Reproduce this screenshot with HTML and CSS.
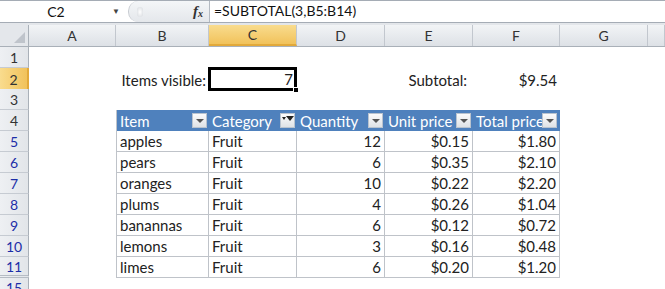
FILE: index.html
```html
<!DOCTYPE html>
<html lang="en">
<head>
  <meta charset="UTF-8">
  <title>SUBTOTAL visible items</title>
  <link rel="stylesheet" href="styles.css">
</head>
<body>
  <div class="formula-bar">
    <div class="name-box">
      <span class="name">C2</span>
      <span class="drop">&#9660;</span>
    </div>
    <div class="fx-area">
      <span class="dimple"></span>
      <span class="fx">f<sub>x</sub></span>
    </div>
    <div class="formula">=SUBTOTAL(3,B5:B14)</div>
  </div>

  <div class="sheet">
    <div class="row col-heads">
      <div class="corner"></div>
      <div class="ch">A</div><div class="ch">B</div><div class="ch sel">C</div><div class="ch">D</div>
      <div class="ch">E</div><div class="ch">F</div><div class="ch">G</div><div class="ch"></div>
    </div>

    <div class="row">
      <div class="rh">1</div>
    </div>
    <div class="row">
      <div class="rh sel">2</div>
      <div class="c"></div>
      <div class="c num">Items visible:</div>
      <div class="c num active">7<span class="handle"></span></div>
      <div class="c"></div>
      <div class="c num label">Subtotal:</div>
      <div class="c num">$9.54</div>
    </div>
    <div class="row">
      <div class="rh">3</div>
    </div>
    <div class="row">
      <div class="rh">4</div>
      <div class="c"></div>
      <div class="c th first">Item<span class="fbtn"></span></div>
      <div class="c th">Category<span class="fbtn on"></span></div>
      <div class="c th">Quantity<span class="fbtn"></span></div>
      <div class="c th">Unit price<span class="fbtn"></span></div>
      <div class="c th">Total price<span class="fbtn"></span></div>
    </div>
    <div id="rows"></div>
    <div class="row last">
      <div class="rh blue">15</div>
    </div>
  </div>

  <script>
    const items = [
      ["apples", 12, 0.15],
      ["pears", 6, 0.35],
      ["oranges", 10, 0.22],
      ["plums", 4, 0.26],
      ["banannas", 6, 0.12],
      ["lemons", 3, 0.16],
      ["limes", 6, 0.20]
    ];
    const rows = document.getElementById("rows");
    items.forEach((it, i) => {
      const r = document.createElement("div");
      r.className = "row" + (i === items.length - 1 ? " hidden-after" : "");
      r.innerHTML =
        `<div class="rh blue">${i + 5}</div>` +
        `<div class="c"></div>` +
        `<div class="c td first">${it[0]}</div>` +
        `<div class="c td">Fruit</div>` +
        `<div class="c td num">${it[1]}</div>` +
        `<div class="c td num">$${it[2].toFixed(2)}</div>` +
        `<div class="c td num">$${(it[1] * it[2]).toFixed(2)}</div>`;
      rows.appendChild(r);
    });
  </script>
</body>
</html>
```

FILE: styles.css
```css
* {
  box-sizing: border-box;
}
body {
  margin: 0;
  width: 665px;
  height: 289px;
  overflow: hidden;
  background: #ffffff;
  font-family: Lato, "Open Sans", sans-serif;
  font-size: 15px;
  color: #222;
}

/* formula bar */
.formula-bar {
  display: flex;
  height: 25px;
  border-top: 1px solid #a5acb5;
  border-bottom: 3px solid #e3e6ea;
  background: #fff;
  position: relative;
}
.formula-bar::after {
  content: "";
  position: absolute;
  left: 0;
  right: 0;
  bottom: -1px;
  border-bottom: 1px solid #a5acb5;
}
.name-box {
  width: 128px;
  display: flex;
  align-items: center;
  justify-content: center;
  position: relative;
  font-size: 14px;
  color: #111;
}
.name-box .name {
  margin-left: -16px;
}
.name-box .drop {
  position: absolute;
  right: 8px;
  top: 5px;
  font-size: 8px;
  color: #444;
}
.fx-area {
  width: 82px;
  display: flex;
  align-items: center;
  justify-content: space-between;
  padding: 0 6px 0 2px;
  background: linear-gradient(#f4f6f8, #e4e7eb);
  border-left: 1px solid #c8ccd2;
  border-right: 1px solid #b4bac2;
  border-radius: 10px 0 0 10px;
}
.dimple {
  width: 6px;
  height: 10px;
  margin-left: 6px;
  border-radius: 3px;
  background: radial-gradient(#ffffff, #d4d8dd);
}
.fx {
  font-family: "Liberation Serif", serif;
  font-style: italic;
  font-weight: bold;
  font-size: 15px;
  color: #333;
}
.fx sub {
  font-size: 10px;
  vertical-align: -1px;
}
.formula {
  flex: 1;
  padding: 1px 0 0 4px;
  font-size: 14px;
  color: #111;
}

/* sheet */
.row {
  display: grid;
  grid-template-columns: 29px 87px 93px 88px 88px 88px 87px 88px 17px;
  height: 21px;
}
.col-heads {
  height: 22px;
  border-bottom: 1px solid #a9b0b8;
}
.corner {
  background: #e4e7eb;
  border-right: 1px solid #a9b0b8;
  position: relative;
}
.corner::after {
  content: "";
  position: absolute;
  right: 3px;
  bottom: 3px;
  border-left: 11px solid transparent;
  border-bottom: 11px solid #bfc4cb;
}
.ch {
  background: linear-gradient(#f2f4f6, #dde1e6);
  border-right: 1px solid #c2c7ce;
  display: flex;
  align-items: center;
  justify-content: center;
  font-size: 14px;
  color: #333;
}
.ch.sel {
  background: linear-gradient(#f9dc8e, #f1c25b);
  border-bottom: 2px solid #e2a93a;
}
.rh {
  background: linear-gradient(90deg, #eef0f3, #e2e5e9);
  border-right: 1px solid #a9b0b8;
  border-bottom: 1px solid #c6cbd2;
  display: flex;
  align-items: center;
  justify-content: center;
  font-size: 14px;
  color: #333;
}
.rh.sel {
  background: linear-gradient(90deg, #f9dc8e, #f1c25b);
  border-right: 2px solid #e2a93a;
}
.rh.blue {
  color: #1c2ea8;
}
.hidden-after .rh {
  border-bottom: 3px double #b6bcc4;
}
.row.last {
  height: 13px;
  overflow: hidden;
}
.row.last .rh {
  align-items: flex-start;
  padding-top: 1px;
}

/* cells */
.c {
  padding: 0 3px;
  display: flex;
  align-items: center;
  white-space: nowrap;
  position: relative;
}
.num {
  justify-content: flex-end;
}
.label {
  padding-right: 6px;
}
.active {
  border: 3px solid #000;
  margin: -1px 0 0 -1px;
  padding-right: 1px;
}
.handle {
  position: absolute;
  right: -5px;
  bottom: -5px;
  width: 6px;
  height: 6px;
  background: #000;
  border: 1px solid #fff;
}

/* table */
.th {
  background: #4f81bd;
  color: #fff;
}
.th .fbtn {
  position: absolute;
  right: 2px;
  top: 3px;
  width: 15px;
  height: 15px;
  background: linear-gradient(#fbfbfb, #dfe2e6);
  border: 1px solid #b9c3cf;
}
.th .fbtn::after {
  content: "";
  position: absolute;
  left: 3px;
  top: 5px;
  border-left: 4px solid transparent;
  border-right: 4px solid transparent;
  border-top: 4px solid #555;
}
.th .fbtn.on::before {
  content: "";
  position: absolute;
  left: 5px;
  top: 2px;
  width: 0;
  border-left: 4px solid transparent;
  border-right: 4px solid transparent;
  border-top: 5px solid #222;
}
.th .fbtn.on::after {
  left: 1px;
  top: 3px;
  border-left: 2px solid transparent;
  border-right: 2px solid transparent;
  border-top: 3px solid #222;
}
.th.first,
.td.first {
  border-left: 1px solid #bfc3c9;
}
.td {
  border-right: 1px solid #bfc3c9;
  border-bottom: 1px solid #bfc3c9;
  color: #222;
}
.th:last-child {
  border-right: 1px solid #4f81bd;
}
```
